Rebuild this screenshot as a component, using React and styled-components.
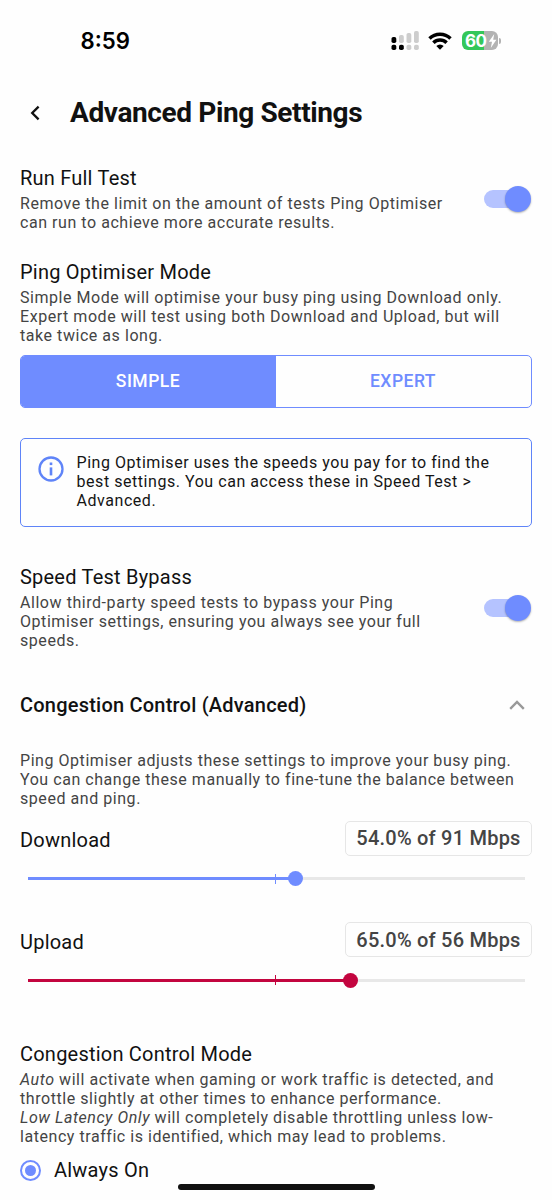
import React, { useState } from "react";
import styled, { createGlobalStyle } from "styled-components";

const blue = "#6f8cff";
const infoBlue = "#5f84f8";
const crimson = "#c3053f";

const GlobalStyle = createGlobalStyle`
  * {
    box-sizing: border-box;
  }
  body {
    margin: 0;
    background-color: #fefefe;
    color: #111;
    font-family: Roboto, "Liberation Sans", sans-serif;
  }
  button {
    font-family: inherit;
    border: none;
    background: none;
    padding: 0;
    cursor: pointer;
  }
`;

const Container = styled.div`
  position: relative;
  width: 552px;
  height: 1200px;
  padding: 0 20px;
  overflow: hidden;
`;

const StatusBar = styled.div`
  height: 82px;
  padding: 0 31px 1px 60.5px;
  display: flex;
  align-items: center;
  justify-content: space-between;
`;

const Time = styled.span`
  font-family: Inter, sans-serif;
  font-size: 22.2px;
  font-weight: 600;
  color: #000;
`;

const StatusIcons = styled.div`
  display: flex;
  align-items: center;
`;

const Battery = styled.div`
  width: 36px;
  height: 19px;
  margin-left: 10px;
  padding-left: 3px;
  border-radius: 6px;
  display: flex;
  align-items: center;
  background: linear-gradient(to right, #34c759 60%, #b3b3b3 60%);
  color: white;
  font-family: Inter, sans-serif;
  font-size: 17px;
  font-weight: 700;
  letter-spacing: -0.5px;
`;

const Bolt = styled.svg`
  flex: none;
  margin-left: 1px;
`;

const BatteryTip = styled.div`
  width: 2px;
  height: 6px;
  margin-left: 1px;
  border-radius: 0 2px 2px 0;
  background-color: #b3b3b3;
`;

const Header = styled.div`
  height: 60px;
  display: flex;
  align-items: center;
`;

const BackButton = styled.button`
  width: 30px;
  height: 30px;
  margin-right: 20px;
  padding-top: 2px;
  display: flex;
  align-items: center;
  justify-content: center;
`;

const PageTitle = styled.h1`
  margin: 0;
  font-size: 28px;
  font-weight: 700;
  letter-spacing: -0.38px;
  white-space: nowrap;
`;

const Section = styled.div`
  margin-top: ${(props) => props.$top}px;
  display: flex;
  align-items: center;
  justify-content: space-between;
`;

const Title = styled.h2`
  margin: 0 0 1px;
  font-size: 20px;
  line-height: 30px;
  font-weight: 400;
  letter-spacing: 0.22px;
`;

const Desc = styled.p`
  margin: 0;
  font-size: 16px;
  line-height: 19px;
  letter-spacing: 0.55px;
  color: #444;
  white-space: nowrap;
`;

const Switch = styled.button`
  width: 47px;
  height: 26px;
  margin: 3px 1px 0 0;
  display: flex;
  align-items: center;
`;

const Track = styled.span`
  width: 44px;
  height: 18px;
  border-radius: 9px;
  display: flex;
  align-items: center;
  background-color: ${(props) => (props.$on ? "#b5c3ff" : "#ccc")};
`;

const Knob = styled.span`
  flex: none;
  width: 26px;
  height: 26px;
  margin-left: ${(props) => (props.$on ? 21 : 0)}px;
  border-radius: 50%;
  background-color: ${(props) => (props.$on ? blue : "#fafafa")};
  box-shadow: 0 1px 2px rgba(0, 0, 0, 0.3);
`;

const ModeButtons = styled.div`
  height: 53px;
  margin-top: 10px;
  display: flex;
  border: 1px solid ${blue};
  border-radius: 5px;
  overflow: hidden;
`;

const ModeButton = styled.button`
  flex: 1;
  font-size: 17.5px;
  font-weight: 500;
  letter-spacing: 0.5px;
  padding: 0 1px 2px 0;
  color: ${(props) => (props.$active ? "white" : blue)};
  background-color: ${(props) => (props.$active ? blue : "transparent")};
`;

const InfoBox = styled.div`
  height: 89px;
  margin-top: 30px;
  padding: 14px 17px;
  display: flex;
  border: 1px solid ${infoBlue};
  border-radius: 5px;
`;

const InfoIcon = styled.svg`
  flex: none;
  margin: 3px 12.5px 0 0;
`;

const InfoText = styled(Desc)`
  color: #151515;
`;

const AccordionHeader = styled.div`
  height: 40px;
  margin: 35px 0 26px;
  padding-right: 7px;
  display: flex;
  align-items: center;
  justify-content: space-between;
`;

const AccordionTitle = styled(Title)`
  margin: 0;
  font-weight: 500;
`;

const SliderRow = styled.div`
  height: 36px;
  margin-top: ${(props) => props.$top}px;
  display: flex;
  align-items: center;
  justify-content: space-between;
`;

const SliderLabel = styled.span`
  font-size: 20px;
  letter-spacing: 0.22px;
  padding-top: 4px;
`;

const Value = styled.div`
  width: 187px;
  height: 35px;
  display: flex;
  align-items: center;
  justify-content: center;
  border: 1px solid #e6e6e6;
  border-radius: 5px;
  font-size: 20px;
  font-weight: 500;
  letter-spacing: 0.22px;
  color: #444;
`;

const Rail = styled.div`
  height: 45px;
  padding: 0 7.5px;
  display: flex;
  align-items: center;
`;

const Filled = styled.div`
  height: 3px;
  background-color: ${(props) => props.color};
`;

const Rest = styled.div`
  flex: 1;
  height: 3px;
  background-color: #e8e8e8;
`;

const Thumb = styled.div`
  flex: none;
  width: 15px;
  height: 15px;
  margin: 0 -7.5px;
  border-radius: 50%;
  background-color: ${(props) => props.color};
  z-index: 1;
`;

const Mark = styled.div`
  flex: none;
  width: 1px;
  height: 10px;
  margin-left: -1px;
  background-color: ${(props) => props.color};
`;

const Option = styled.label`
  height: 22px;
  margin-top: 13px;
  display: flex;
  align-items: center;
  gap: 13px;
  font-size: 20px;
  letter-spacing: 0.22px;
`;

const Radio = styled.span`
  width: 21px;
  height: 21px;
  border: 2px solid ${blue};
  border-radius: 50%;
  display: flex;
  align-items: center;
  justify-content: center;

  &::after {
    content: "";
    width: 11px;
    height: 11px;
    border-radius: 50%;
    background-color: ${blue};
  }
`;

const HomeIndicator = styled.div`
  position: absolute;
  left: 178px;
  bottom: 10px;
  width: 197px;
  height: 6px;
  border-radius: 3px;
  background-color: #111;
`;

const Signal = () => (
  <svg width="28" height="20" viewBox="0 0 28 20">
    <g fill="#000">
      <rect x="0.5" y="6" width="4.8" height="6" rx="1.8" />
      <rect x="0.5" y="13.8" width="4.8" height="5.3" rx="1.8" />
      <rect x="8" y="13.8" width="4.8" height="5.3" rx="1.8" />
    </g>
    <g fill="#cdcdcd">
      <rect x="8" y="4" width="4.8" height="8" rx="1.8" />
      <rect x="15.5" y="2" width="4.8" height="10" rx="1.8" />
      <rect x="23" y="0" width="4.8" height="12" rx="1.8" />
      <rect x="15.5" y="13.8" width="4.8" height="5.3" rx="1.8" />
      <rect x="23" y="13.8" width="4.8" height="5.3" rx="1.8" />
    </g>
  </svg>
);

const WifiIcon = styled.svg`
  margin-left: 9px;
`;

const Wifi = () => (
  <WifiIcon width="24" height="18" viewBox="0 0 24 18">
    <g fill="none" stroke="#000" strokeWidth="3.5">
      <path d="M1.5 6.5a15.1 15.1 0 0 1 21 0" />
      <path d="M5.4 10.8a9.4 9.4 0 0 1 13.2 0" />
    </g>
    <path d="M12 17.8 8.3 14a5.2 5.2 0 0 1 7.4 0z" fill="#000" />
  </WifiIcon>
);

const Toggle = () => {
  const [on, setOn] = useState(true);
  return (
    <Switch onClick={() => setOn(!on)}>
      <Track $on={on}>
        <Knob $on={on} />
      </Track>
    </Switch>
  );
};

const Slider = ({ label, value, speed, color, top }) => (
  <>
    <SliderRow $top={top}>
      <SliderLabel>{label}</SliderLabel>
      <Value>
        {value.toFixed(1)}% of {speed} Mbps
      </Value>
    </SliderRow>
    <Rail>
      <Filled color={color} style={{ width: "50%" }} />
      <Mark color={color} />
      <Filled color={color} style={{ width: `${value - 50}%` }} />
      <Thumb color={color} />
      <Rest />
    </Rail>
  </>
);

const App = () => {
  const [mode, setMode] = useState("SIMPLE");

  return (
    <Container>
      <GlobalStyle />
      <StatusBar>
        <Time>8:59</Time>
        <StatusIcons>
          <Signal />
          <Wifi />
          <Battery>
            60
            <Bolt width="9" height="14" viewBox="0 0 9 14">
              <path d="M6.2 0 0.8 7.8H4L2.8 14 8.4 5.8H5.2z" fill="white" />
            </Bolt>
          </Battery>
          <BatteryTip />
        </StatusIcons>
      </StatusBar>
      <Header>
        <BackButton>
          <svg width="12" height="16" viewBox="0 0 12 16">
            <path d="M9.6 1.6 3.2 8l6.4 6.4" fill="none" stroke="#111" strokeWidth="2.3" />
          </svg>
        </BackButton>
        <PageTitle>Advanced Ping Settings</PageTitle>
      </Header>
      <Section $top={21}>
        <div>
          <Title>Run Full Test</Title>
          <Desc>
            Remove the limit on the amount of tests Ping Optimiser
            <br />
            can run to achieve more accurate results.
          </Desc>
        </div>
        <Toggle />
      </Section>
      <Section $top={25}>
        <div>
          <Title>Ping Optimiser Mode</Title>
          <Desc>
            Simple Mode will optimise your busy ping using Download only.
            <br />
            Expert mode will test using both Download and Upload, but will
            <br />
            take twice as long.
          </Desc>
        </div>
      </Section>
      <ModeButtons>
        {["SIMPLE", "EXPERT"].map((m) => (
          <ModeButton key={m} $active={mode === m} onClick={() => setMode(m)}>
            {m}
          </ModeButton>
        ))}
      </ModeButtons>
      <InfoBox>
        <InfoIcon width="26" height="26" viewBox="0 0 26 26">
          <circle cx="13" cy="13" r="11.5" fill="none" stroke={infoBlue} strokeWidth="2.3" />
          <rect x="11.7" y="6.5" width="2.6" height="2.6" fill={infoBlue} />
          <rect x="11.7" y="11.4" width="2.6" height="8" fill={infoBlue} />
        </InfoIcon>
        <InfoText>
          Ping Optimiser uses the speeds you pay for to find the
          <br />
          best settings. You can access these in Speed Test &gt;
          <br />
          Advanced.
        </InfoText>
      </InfoBox>
      <Section $top={35}>
        <div>
          <Title>Speed Test Bypass</Title>
          <Desc>
            Allow third-party speed tests to bypass your Ping
            <br />
            Optimiser settings, ensuring you always see your full
            <br />
            speeds.
          </Desc>
        </div>
        <Toggle />
      </Section>
      <AccordionHeader>
        <AccordionTitle>Congestion Control (Advanced)</AccordionTitle>
        <svg width="16" height="10" viewBox="0 0 16 10">
          <path d="M1.2 8.8 8 2l6.8 6.8" fill="none" stroke="#999" strokeWidth="2.4" />
        </svg>
      </AccordionHeader>
      <Desc>
        Ping Optimiser adjusts these settings to improve your busy ping.
        <br />
        You can change these manually to fine-tune the balance between
        <br />
        speed and ping.
      </Desc>
      <Slider label="Download" value={54} speed={91} color={blue} top={12} />
      <Slider label="Upload" value={65} speed={56} color={crimson} top={20.5} />
      <Section $top={36.5}>
        <div>
          <Title>Congestion Control Mode</Title>
          <Desc>
            <i>Auto</i> will activate when gaming or work traffic is detected, and
            <br />
            throttle slightly at other times to enhance performance.
            <br />
            <i>Low Latency Only</i> will completely disable throttling unless low-
            <br />
            latency traffic is identified, which may lead to problems.
          </Desc>
        </div>
      </Section>
      <Option>
        <Radio />
        Always On
      </Option>
      <HomeIndicator />
    </Container>
  );
};

export default App;
